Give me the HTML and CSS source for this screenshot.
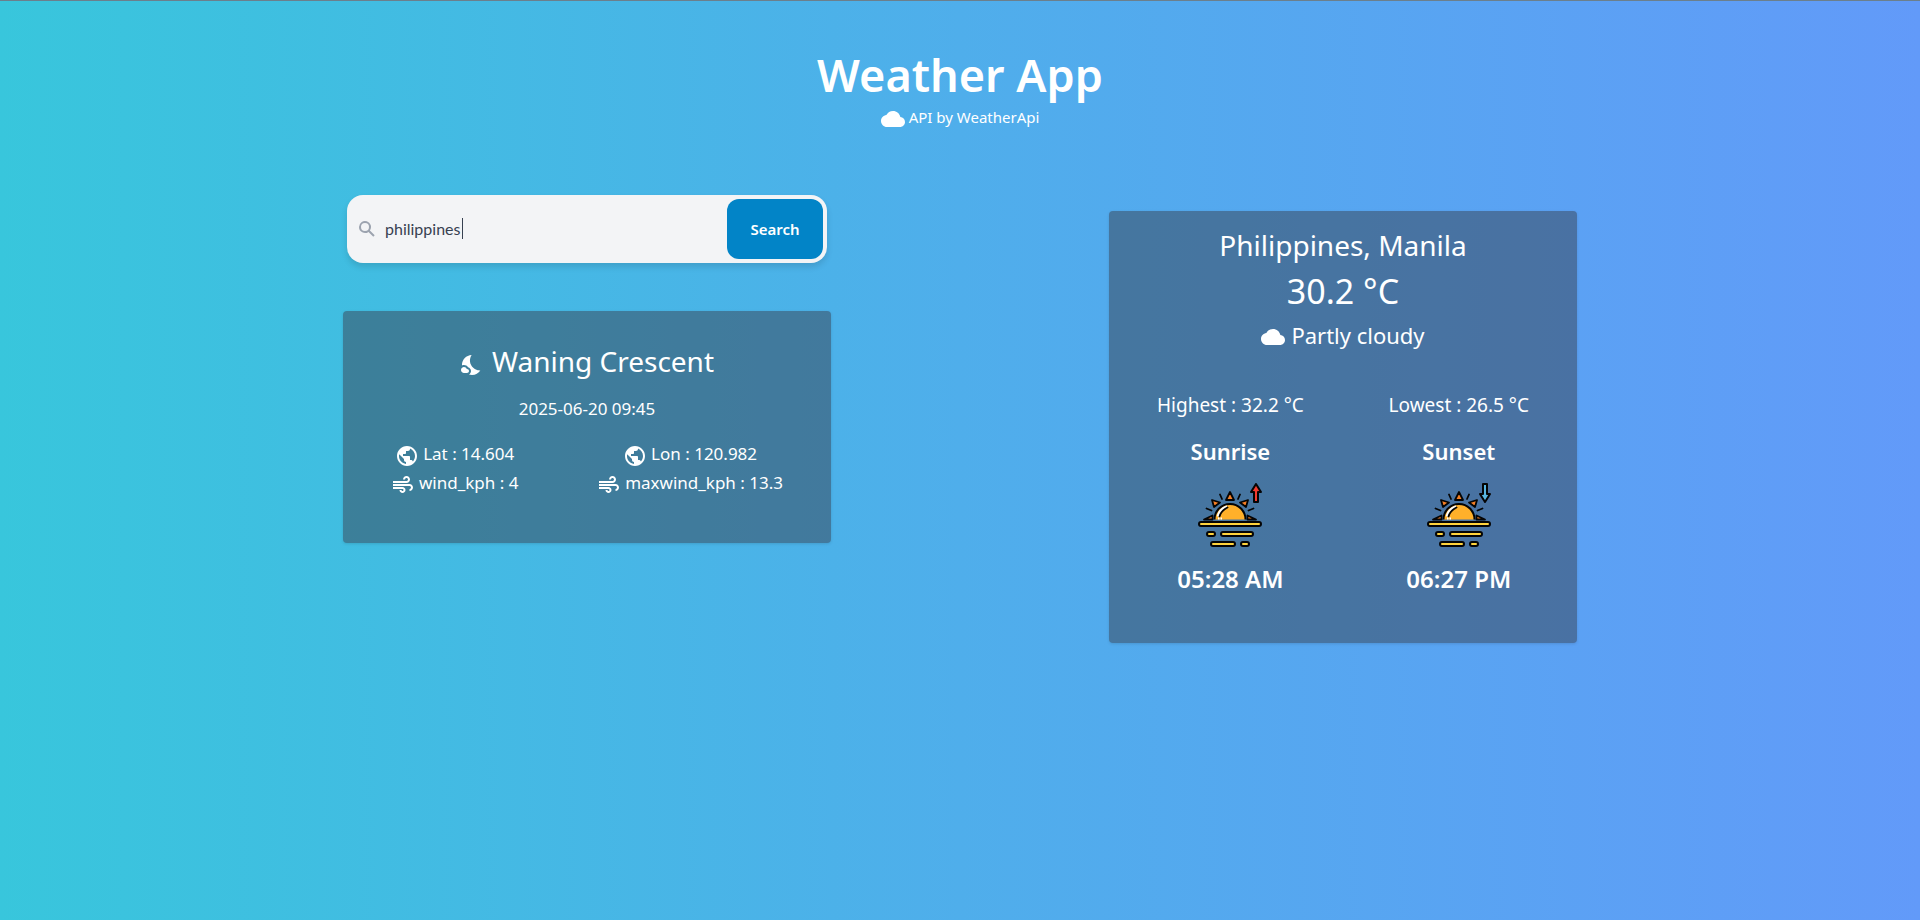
FILE: index.html
```html
<!DOCTYPE html>
<html lang="en">
<head>
<meta charset="utf-8">
<meta name="viewport" content="width=device-width, initial-scale=1">
<title>Weather App</title>
<link rel="stylesheet" href="styles.css">
</head>
<body>
<svg class="defs" aria-hidden="true">
  <defs>
    <symbol id="cloud" viewBox="0 0 24 24"><path d="M19.35 10.04C18.67 6.59 15.64 4 12 4 9.11 4 6.6 5.64 5.35 8.04 2.34 8.36 0 10.91 0 14c0 3.31 2.69 6 6 6h13c2.76 0 5-2.24 5-5 0-2.64-2.05-4.78-4.65-4.96z"/></symbol>
    <symbol id="globe" viewBox="0 0 24 24"><path d="M12 2C6.48 2 2 6.48 2 12s4.48 10 10 10 10-4.48 10-10S17.52 2 12 2zm-1 17.93c-3.95-.49-7-3.85-7-7.93 0-.62.08-1.21.21-1.79L9 15v1c0 1.1.9 2 2 2v1.93zm6.9-2.54c-.26-.81-1-1.39-1.9-1.39h-1v-3c0-.55-.45-1-1-1H8v-2h2c.55 0 1-.45 1-1V7h2c1.1 0 2-.9 2-2v-.41c2.93 1.19 5 4.06 5 7.41 0 2.08-.8 3.97-2.1 5.39z"/></symbol>
    <symbol id="air" viewBox="0 0 24 24"><path d="M14.5 17c0 1.65-1.35 3-3 3s-3-1.35-3-3h2c0 .55.45 1 1 1s1-.45 1-1-.45-1-1-1H2v-2h9.5c1.65 0 3 1.35 3 3zM19 6.500C19 4.570 17.430 3 15.500 3S12 4.570 12 6.500h2c0-.83.67-1.500 1.500-1.500s1.500.67 1.500 1.500S16.330 8 15.500 8H2v2h13.500c1.930 0 3.500-1.570 3.500-3.500zm-.5 4.500H2v2h16.500c.83 0 1.500.67 1.500 1.500s-.67 1.500-1.500 1.500v2c1.930 0 3.500-1.570 3.500-3.500S20.430 11 18.500 11z"/></symbol>
    <symbol id="night" viewBox="0 0 24 24"><path d="M11.1 12.08c-2.33-4.51-.5-8.48.53-10.07C6.27 2.2 1.98 6.59 1.98 12c0 .14.02.28.02.42.62-.27 1.29-.42 2-.42 1.66 0 3.18.83 4.1 2.15C9.77 14.63 11 16.17 11 18c0 1.52-.87 2.83-2.12 3.51.98.32 2.03.5 3.11.5 3.5 0 6.58-1.8 8.37-4.52-2.36.23-6.98-.97-9.26-5.41z"/><path d="M7 16h-.18C6.4 14.84 5.3 14 4 14c-1.66 0-3 1.34-3 3s1.34 3 3 3h3c1.1 0 2-.9 2-2s-.9-2-2-2z"/></symbol>
    <symbol id="horizon" viewBox="0 0 64 64">
      <g fill="#f47f25" stroke="#050505" stroke-width="1.800" stroke-linejoin="round">
        <path d="M28 17l4-8 4 8zM14 17l8 2.500-6 4.500zM50 17l-8 2.500 6 4.500zM14.500 36.500H6l8.500-4zM49.500 36.500H58l-8.500-4z"/>
      </g>
      <path fill="#ffb02a" d="M16.500 36.500a15.500 15.500 0 0 1 31 0z"/>
      <path fill="none" stroke="#050505" stroke-width="2" d="M16.500 36.500a15.500 15.500 0 0 1 31 0"/>
      <path fill="none" stroke="#fff" stroke-width="2.500" d="M20 33.500c1-5 4.500-8.500 9-10"/>
      <path fill="none" stroke="#050505" stroke-width="1.800" stroke-linecap="round" d="M21.500 33.500c1-4 4-7 8-9M22 11.500l2 4.500M42 11.500L40 16M8.500 25.500l5 2M55.500 25.500l-5 2"/>
      <path fill="#fff" d="M20 34.500h1.500v2H20zM22.500 34.500H24v2h-1.500z"/>
      <g fill="#ffd33d" stroke="#050505" stroke-width="2">
        <rect x="1" y="39" width="62" height="4" rx="2"/>
        <rect x="9" y="49" width="8" height="4" rx="2"/>
        <rect x="23" y="49" width="32" height="4" rx="2"/>
        <rect x="13" y="59" width="24" height="4" rx="2"/>
        <rect x="43" y="59" width="8" height="4" rx="2"/>
      </g>
    </symbol>
  </defs>
</svg>
<header class="header">
  <h1 class="title">Weather App</h1>
  <p class="credit"><svg class="icon"><use href="#cloud"/></svg><span>API by WeatherApi</span></p>
</header>
<main class="main">
  <div class="column">
    <form class="search">
      <label class="search-label" for="city"><svg class="search-icon" viewBox="0 0 20 20" role="img" aria-label="City"><path fill-rule="evenodd" d="M8 4a4 4 0 1 0 0 8 4 4 0 0 0 0-8zM2 8a6 6 0 1 1 10.900 3.480l4.800 4.810-1.410 1.410-4.810-4.800A6 6 0 0 1 2 8z"/></svg></label>
      <div class="search-field">
        <input class="search-input" id="city" type="text" value="philippines">
        <span class="caret"></span>
      </div>
      <button class="search-button" type="submit">Search</button>
    </form>
    <section class="card moon">
      <h2 class="moon-title"><svg class="icon"><use href="#night"/></svg><span>Waning Crescent</span></h2>
      <p class="date">2025-06-20 09:45</p>
      <div class="facts">
        <div class="fact-column">
          <p class="fact"><svg class="icon"><use href="#globe"/></svg><span>Lat : 14.604</span></p>
          <p class="fact"><svg class="icon"><use href="#air"/></svg><span>wind_kph : 4</span></p>
        </div>
        <div class="fact-column">
          <p class="fact"><svg class="icon"><use href="#globe"/></svg><span>Lon : 120.982</span></p>
          <p class="fact"><svg class="icon"><use href="#air"/></svg><span>maxwind_kph : 13.3</span></p>
        </div>
      </div>
    </section>
  </div>
  <section class="card today">
    <h2 class="place">Philippines, Manila</h2>
    <p class="temperature">30.2 °C</p>
    <p class="condition"><svg class="icon"><use href="#cloud"/></svg><span>Partly cloudy</span></p>
    <div class="sun-columns">
      <div class="sun-column">
        <p class="extreme">Highest : 32.2 °C</p>
        <h3 class="sun-title">Sunrise</h3>
        <svg class="sun-icon" viewBox="0 0 64 64"><use href="#horizon" width="64" height="64"/><path fill="#f23b2f" stroke="#050505" stroke-width="2" stroke-linejoin="round" d="M58 1l5 8h-3v10h-4V9h-3z"/></svg>
        <p class="sun-time">05:28 AM</p>
      </div>
      <div class="sun-column">
        <p class="extreme">Lowest : 26.5 °C</p>
        <h3 class="sun-title">Sunset</h3>
        <svg class="sun-icon" viewBox="0 0 64 64"><use href="#horizon" width="64" height="64"/><path fill="#58b5e0" stroke="#050505" stroke-width="2" stroke-linejoin="round" d="M58 19l5-8h-3V1h-4v10h-3z"/></svg>
        <p class="sun-time">06:27 PM</p>
      </div>
    </div>
  </section>
</main>
</body>
</html>
```

FILE: styles.css
```css
* { box-sizing: border-box; }
body {
  margin: 0;
  min-height: 100vh;
  border-top: 1px solid #6b7f8c;
  background: linear-gradient(90deg, #38c6dc, #4faeeb 50%, #629af9);
  color: #fff;
  font-family: "Segoe UI", "Noto Sans", sans-serif;
}
h1, h2, h3, p { margin: 0; font-weight: 400; }
.defs { position: absolute; width: 0; height: 0; }
.icon { flex: none; width: 24px; height: 24px; fill: currentColor; }
.header { padding-top: 48px; text-align: center; }
.title { font-size: 45px; font-weight: 600; line-height: 52px; }
.credit { display: flex; justify-content: center; align-items: flex-end; gap: 4px; margin-top: 2px; font-size: 15px; line-height: 28px; }
.main {
  display: flex;
  flex-wrap: wrap;
  justify-content: space-between;
  gap: 48px;
  width: 90%;
  max-width: 1234px;
  margin: 64px auto 0;
}
.column { flex: 0 1 488px; }
.search {
  display: flex;
  align-items: center;
  margin: 0 4px 48px;
  padding: 4px;
  border-radius: 16px;
  background: #f3f4f6;
  box-shadow: 0 4px 6px rgba(0, 0, 0, 0.12);
}
.search-label { display: flex; padding: 0 8px 0 6px; }
.search-icon { width: 20px; height: 20px; fill: #9ca3af; }
.search-field { position: relative; flex: 1; min-width: 0; }
.search-input {
  display: block;
  width: 100%;
  padding: 0;
  border: 0;
  outline: 0;
  background: transparent;
  color: #374151;
  font: 16px/24px Lato, sans-serif;
}
.caret { position: absolute; top: 1px; left: 77px; width: 1px; height: 21px; background: #374151; }
.search-button {
  width: 96px;
  height: 60px;
  border: 0;
  border-radius: 12px;
  background: #0284c7;
  color: #fff;
  font: 600 15px/24px "Segoe UI", "Noto Sans", sans-serif;
}
.card {
  border-radius: 4px;
  background: rgba(55, 65, 81, 0.5);
  box-shadow: 0 1px 3px rgba(0, 0, 0, 0.12);
  text-align: center;
}
.moon { padding: 34px 0 46px; }
.moon-title { display: flex; justify-content: center; align-items: flex-end; gap: 8px; font-size: 28px; line-height: 32px; }
.date { margin-top: 18px; font-size: 17px; line-height: 28px; }
.facts { display: flex; justify-content: space-between; margin-top: 16px; padding: 0 48px; }
.fact { display: flex; justify-content: center; align-items: flex-end; gap: 4px; font-size: 17px; line-height: 29px; }
.today { flex: 0 1 468px; margin-top: 16px; padding: 14px 0 48px; }
.place { font-size: 28px; line-height: 40px; }
.temperature { font-size: 34px; line-height: 52px; }
.condition { display: flex; justify-content: center; align-items: flex-end; gap: 6px; padding: 4px 0; font-size: 22px; line-height: 28px; }
.sun-columns { display: flex; justify-content: space-between; margin-top: 38px; padding: 0 48px; }
.sun-column { display: flex; flex-direction: column; align-items: center; }
.extreme { font-size: 19px; line-height: 28px; }
.sun-title { margin-top: 16px; font-size: 22px; font-weight: 600; line-height: 32px; }
.sun-icon { width: 64px; height: 64px; margin: 16px 0; }
.sun-time { font-size: 24px; font-weight: 600; line-height: 32px; }
```
